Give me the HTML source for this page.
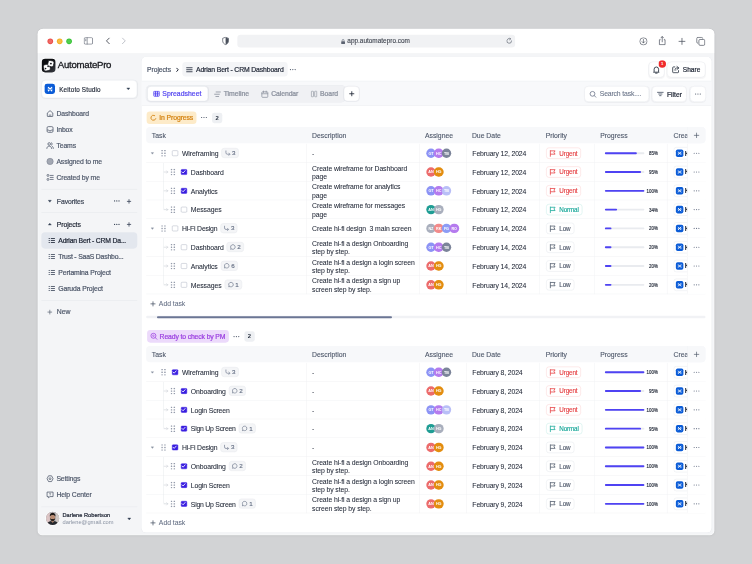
<!DOCTYPE html>
<html lang="en"><head><meta charset="utf-8"><title>AutomatePro - CRM Dashboard</title>
<style>
*{box-sizing:border-box;margin:0;padding:0}
svg{display:block}
html,body{width:752px;height:564px;overflow:hidden;background:#d2d3d5}
body{font-family:"Liberation Sans",sans-serif;color:#1d2433}
#stage{position:absolute;left:0;top:0;width:1600px;height:1200px;transform:scale(0.47);transform-origin:0 0;filter:contrast(1)}
#win{position:absolute;left:80px;top:61px;width:1440px;height:1077.500px;border-radius:12px 12px 10px 10px;background:#f4f5f7;overflow:hidden;box-shadow:0 0 0 1px rgba(20,25,40,.035),0 1px 5px rgba(20,25,40,.05)}
#win:after{content:'';position:absolute;inset:0;border-radius:12px 12px 10px 10px;box-shadow:inset 0 0 0 1.500px rgba(255,255,255,.75);pointer-events:none}
#tb{position:absolute;left:0;top:0;width:1440px;height:52px;background:#fff}
.abs{position:absolute}
.m{-webkit-text-stroke:.14px currentColor}
.sb{-webkit-text-stroke:.45px currentColor}
.tl{position:absolute;top:21px;width:12px;height:12px;border-radius:50%}
#url{position:absolute;left:425px;top:13px;width:591px;height:27px;border-radius:7px;background:#f1f2f4;font-size:13.700px;color:#3a3f4a;display:flex;align-items:center;justify-content:flex-start;gap:4.500px;padding-left:219.500px;-webkit-text-stroke:.2px currentColor}
#side{position:absolute;left:0;top:51px;width:221px;height:1025px}
.nav{position:absolute;left:18px;height:20px;display:flex;align-items:center;gap:5px;font-size:14.600px;color:#4b5567;letter-spacing:-.25px;white-space:nowrap;-webkit-text-stroke:.35px currentColor}
.nav span{padding-top:0px}
.sdiv{position:absolute;left:8px;width:204px;height:1px;background:#e4e6ea}
#card{position:absolute;left:221px;top:60px;width:1213px;height:1011.500px;background:#fff;border-radius:10px;overflow:hidden;box-shadow:0 0 0 1px #e9ebef}
.row{position:absolute;left:10px;width:1190px;height:40px;border-bottom:1px solid #f0f1f3;font-size:14.600px;color:#1d2433}
.cell{position:absolute;top:0;height:40px;display:flex;align-items:center;white-space:nowrap}
.vl{position:absolute;top:0;width:1px;background:#f0f1f3}
.th{position:absolute;left:10px;width:1190px;height:35px;background:#f7f8fa;border-radius:8px;font-size:14.600px;color:#4b5567;-webkit-text-stroke:.2px currentColor}
.th span{position:absolute;top:2px;line-height:35px;letter-spacing:0px}
.chip{position:absolute;height:27px;border-radius:7px;display:flex;align-items:center;gap:5px;padding:0 0 0 7px;font-size:14.600px;white-space:nowrap;-webkit-text-stroke:.45px currentColor}
.cnt{position:absolute;height:21.500px;width:22px;border-radius:5px;background:rgba(238,240,243,.99);font-size:12.500px;font-weight:700;color:#2b3342;text-align:center;line-height:22.500px}
.cb{width:12.800px;height:12.800px;border-radius:2.300px;border:1.900px solid #a9b0be;background:#fff;flex:none}
.cb.on{background:#3a1fe0;border-color:#3a1fe0;border-radius:2px}
.badge{height:21px;border:1px solid #e6e8ec;border-radius:6px;background:rgba(244,245,247,.99);display:flex;align-items:center;gap:3px;padding:0 5.500px;font-size:13.300px;color:#667085;margin-left:6.500px;margin-top:-1px;-webkit-text-stroke:.3px currentColor}
.av{width:20.600px;height:20.600px;border-radius:50%;font-size:8px;font-weight:700;color:#fff;text-align:center;line-height:21px;margin-right:-4.100px;flex:none;letter-spacing:-.2px}
.pr{height:24px;border-radius:6px;border:1px solid;display:flex;align-items:center;gap:6px;padding:0 7px 0 5px;font-size:13.400px;letter-spacing:-.3px;background:rgba(255,255,255,.99);-webkit-text-stroke:.25px currentColor}
.bar{position:relative;width:84px;height:3.500px;border-radius:2px;background:#e9ebef}
.bar i{position:absolute;left:0;top:0;height:3.500px;border-radius:2px;background:#4f43f3}
.pct{font-size:9.500px;color:#1d2433;width:29px;text-align:right;-webkit-text-stroke:.3px currentColor}
.desc{white-space:nowrap;line-height:18px;font-size:14.600px;letter-spacing:-.2px;-webkit-text-stroke:.1px currentColor}
.btn{position:absolute;height:34px;border:1px solid #e6e8ec;border-radius:9px;background:#fff;display:flex;align-items:center;justify-content:center;gap:6px;font-size:14.600px;color:#1d2433;white-space:nowrap;box-shadow:0 1px 2px rgba(16,24,40,.04)}
.tab{position:absolute;top:62px;height:34px;display:flex;align-items:center;gap:5px;font-size:14.600px;color:#8a909d;letter-spacing:-.1px;-webkit-text-stroke:.5px currentColor}
</style></head><body>
<div id="stage"><div id="win">
<div id="tb">
 <div class="tl" style="left:21px;background:radial-gradient(circle,#ef6a66 0 35%,#ea4d49 60%)"></div>
 <div class="tl" style="left:41px;background:radial-gradient(circle,#f7bd45 0 35%,#f3ae25 60%)"></div>
 <div class="tl" style="left:61px;background:radial-gradient(circle,#52cf50 0 35%,#38c236 60%)"></div>
 <div class="abs" style="left:98px;top:18px"><svg width="20" height="16" viewBox="0 0 20 16" fill="none" ><rect x="1" y="1" width="18" height="14" rx="2.500" stroke="#5b6270" stroke-width="1.500"/><path d="M7.500 1v14M3.500 4.500h1.500M3.500 7.500h1.500" stroke="#5b6270" stroke-width="1.300" stroke-linecap="round"/></svg></div>
 <div class="abs" style="left:144px;top:18px"><svg width="11" height="16" viewBox="0 0 11 16" fill="none" ><path d="M8.500 2 2.500 8l6 6" stroke="#3a3f4a" stroke-width="1.800" stroke-linecap="round" stroke-linejoin="round"/></svg></div>
 <div class="abs" style="left:178px;top:18px"><svg width="11" height="16" viewBox="0 0 11 16" fill="none" ><path d="M2.500 2l6 6-6 6" stroke="#b4b8c0" stroke-width="1.800" stroke-linecap="round" stroke-linejoin="round"/></svg></div>
 <div class="abs" style="left:392px;top:17px"><svg width="16" height="19" viewBox="0 0 16 19" fill="none" ><path d="M8 1.200 1.800 3.500v5.500c0 4 2.800 6.600 6.200 8 3.400-1.400 6.200-4 6.200-8V3.500z" stroke="#4a505c" stroke-width="1.500" stroke-linejoin="round"/><path d="M8 1.700v14.800c3.200-1.400 5.700-3.700 5.700-7.500V3.800z" fill="#4a505c"/></svg></div>
 <div id="url"><svg width="10" height="12" viewBox="0 0 10 12" fill="none" ><rect x="1" y="5.500" width="8" height="6" rx="1.200" fill="#5b6270"/><path d="M3 5.500V4a2 2 0 0 1 4 0v1.500" stroke="#5b6270" stroke-width="1.300"/></svg><span>app.automatepro.com</span></div>
 <div class="abs" style="left:997px;top:19px"><svg width="13" height="14" viewBox="0 0 13 14" fill="none" ><path d="M11.500 7A5 5 0 1 1 8.500 2.500" stroke="#5b6270" stroke-width="1.400" stroke-linecap="round"/><path d="M7.500 .8 9.800 2.700 7.500 4.600" stroke="#5b6270" stroke-width="1.400" stroke-linecap="round" stroke-linejoin="round"/></svg></div>
 <div class="abs" style="left:1280px;top:18px"><svg width="18" height="18" viewBox="0 0 18 18" fill="none" ><circle cx="9" cy="9" r="7.700" stroke="#4a505c" stroke-width="1.400"/><path d="M9 5v7M6 9.500l3 3 3-3" stroke="#4a505c" stroke-width="1.400" stroke-linecap="round" stroke-linejoin="round"/></svg></div>
 <div class="abs" style="left:1320px;top:15px"><svg width="18" height="21" viewBox="0 0 18 21" fill="none" ><path d="M5.500 8.500H3v10.500h12V8.500h-2.500" stroke="#4a505c" stroke-width="1.500" stroke-linejoin="round"/><path d="M9 13V2M6.300 4.500 9 1.800l2.700 2.700" stroke="#4a505c" stroke-width="1.500" stroke-linecap="round" stroke-linejoin="round"/></svg></div>
 <div class="abs" style="left:1362.500px;top:19px"><svg width="16" height="16" viewBox="0 0 16 16" fill="none" ><path d="M8 1.500v13M1.500 8h13" stroke="#4a505c" stroke-width="1.600" stroke-linecap="round"/></svg></div>
 <div class="abs" style="left:1401px;top:17px"><svg width="20" height="20" viewBox="0 0 20 20" fill="none" ><rect x="6" y="6" width="12.500" height="12.500" rx="2.500" stroke="#4a505c" stroke-width="1.500"/><path d="M14 4A2.500 2.500 0 0 0 11.500 1.500H4A2.500 2.500 0 0 0 1.500 4v7.500A2.500 2.500 0 0 0 4 14" stroke="#4a505c" stroke-width="1.500"/></svg></div>
</div>
<div id="side">
 <div class="abs" style="left:8.500px;top:12.500px;width:29px;height:29px;border-radius:7px;background:linear-gradient(135deg,#0e0f12 40%,#3a3d44);box-shadow:0 0 0 1.500px #fff"><svg width="29" height="29" viewBox="0 0 29 29" fill="none" ><rect x="4" y="12" width="13.500" height="13.500" rx="3.500" fill="#fff" stroke="#15171c" stroke-width="1.200" transform="rotate(-12 10.750 18.750)"/><rect x="13" y="4" width="12.500" height="12.500" rx="3.500" fill="#fff" stroke="#15171c" stroke-width="1.500" transform="rotate(14 19 10)"/><circle cx="8" cy="21" r="1.700" fill="#15171c"/><circle cx="13.300" cy="16.500" r="1.700" fill="#15171c"/><circle cx="19.300" cy="10.300" r="2" fill="#15171c"/></svg></div>
 <div class="abs" style="left:43px;top:14px;font-size:20.500px;line-height:24px;color:#15171c;letter-spacing:-.55px;-webkit-text-stroke:.6px #15171c">AutomatePro</div>
 <div class="abs" style="left:8px;top:58px;width:204px;height:39px;border:1px solid #e4e7ec;border-radius:9px;background:#fff;box-shadow:0 1px 2px rgba(16,24,40,.05)">
   <div class="abs" style="left:6px;top:7px"><div style="width:22px;height:22px;border-radius:5.3px;background:#0b5cd7;flex:none;display:flex;align-items:center;justify-content:center"><svg width="13" height="13" viewBox="0 0 10 10" fill="none" ><path d="M2.200 2.200 7.800 7.800M7.800 2.200 2.200 7.800" stroke="#fff" stroke-width="1.900" stroke-linecap="round"/><path d="M1.600 5h1.400M7 5h1.400" stroke="#fff" stroke-width="1.200" stroke-linecap="round"/></svg></div></div>
   <div class="abs sb" style="left:37px;top:2px;line-height:36px;font-size:13.500px;color:#1d2433;letter-spacing:.3px;-webkit-text-stroke:.3px currentColor">Keitoto Studio</div>
   <div class="abs" style="left:179px;top:13px"><svg width="10" height="10" viewBox="0 0 10 10" fill="none" ><path d="M1.800 3.200h6.400L5 7.200z" fill="#344054" stroke="#344054" stroke-width=".8" stroke-linejoin="round"/></svg></div>
 </div>
 <div class="nav" style="top:119px;left:18px;color:#4b5567;"><svg width="17" height="17" viewBox="0 0 16 16" fill="none" ><path d="M2.500 7 8 2.300 13.500 7v6.200a.8.8 0 0 1-.8.8H3.300a.8.8 0 0 1-.8-.8z" stroke="#4b5567" stroke-width="1.500" stroke-linejoin="round"/><path d="M6.200 11.300h3.600" stroke="#4b5567" stroke-width="1.500" stroke-linecap="round"/></svg><span>Dashboard</span></div>
 <div class="nav" style="top:153px;left:18px;color:#4b5567;"><svg width="17" height="17" viewBox="0 0 16 16" fill="none" ><rect x="2" y="2.300" width="12" height="11.400" rx="2.500" stroke="#4b5567" stroke-width="1.500"/><path d="M2 9h3.200l.9 1.600h3.800L10.800 9H14" stroke="#4b5567" stroke-width="1.500" stroke-linejoin="round"/></svg><span>Inbox</span></div>
 <div class="nav" style="top:187px;left:18px;color:#4b5567;"><svg width="17" height="17" viewBox="0 0 16 16" fill="none" ><circle cx="6.300" cy="5" r="2.600" stroke="#4b5567" stroke-width="1.500"/><path d="M1.500 14c0-2.700 2-4.600 4.800-4.600s4.800 1.900 4.800 4.600" stroke="#4b5567" stroke-width="1.500" stroke-linecap="round"/><path d="M10.800 2.600a2.600 2.600 0 0 1 0 4.800M12.500 9.800c1.300.6 2 2 2 4.200" stroke="#4b5567" stroke-width="1.500" stroke-linecap="round"/></svg><span>Teams</span></div>
 <div class="nav" style="top:221px;left:18px;color:#4b5567;"><svg width="17" height="17" viewBox="0 0 16 16" fill="none" ><circle cx="8" cy="8" r="6.300" fill="#a3a8b3" stroke="#7d8494" stroke-width="1.200"/></svg><span>Assigned to me</span></div>
 <div class="nav" style="top:255px;left:18px;color:#4b5567;"><svg width="17" height="17" viewBox="0 0 16 16" fill="none" ><rect x="2" y="2.200" width="3.600" height="3.600" rx="1" stroke="#4b5567" stroke-width="1.400"/><rect x="2" y="10.200" width="3.600" height="3.600" rx="1" stroke="#4b5567" stroke-width="1.400"/><path d="M8.300 4h6M8.300 8h6M8.300 12h6" stroke="#4b5567" stroke-width="1.500" stroke-linecap="round"/></svg><span>Created by me</span></div>
 <div class="sdiv" style="top:290px"></div>
 <div class="nav" style="top:306px;left:21px;color:#3d4656;gap:10px;-webkit-text-stroke:.4px currentColor"><svg width="10" height="10" viewBox="0 0 10 10" fill="none" ><path d="M1.800 3.200h6.400L5 7.200z" fill="#344054" stroke="#344054" stroke-width=".8" stroke-linejoin="round"/></svg><span>Favorites</span></div>
 <div class="abs" style="left:161px;top:308px"><svg width="15" height="15" viewBox="0 0 16 16" fill="none" ><circle cx="3" cy="8" r="1.4" fill="#344054"/><circle cx="8" cy="8" r="1.4" fill="#344054"/><circle cx="13" cy="8" r="1.4" fill="#344054"/></svg></div><div class="abs" style="left:188.500px;top:310.700px"><svg width="11" height="11" viewBox="0 0 16 16" fill="none" ><path d="M8 2.500v11M2.500 8h11" stroke="#344054" stroke-width="2.4" stroke-linecap="round"/></svg></div>
 <div class="sdiv" style="top:340px"></div>
 <div class="nav" style="top:355px;left:21px;color:#1d2433;gap:10px;-webkit-text-stroke:.4px currentColor"><svg width="10" height="10" viewBox="0 0 10 10" fill="none" ><path d="M1.800 6.800h6.400L5 2.800z" fill="#344054" stroke="#344054" stroke-width=".8" stroke-linejoin="round"/></svg><span>Projects</span></div>
 <div class="abs" style="left:161px;top:357.500px"><svg width="15" height="15" viewBox="0 0 16 16" fill="none" ><circle cx="3" cy="8" r="1.4" fill="#344054"/><circle cx="8" cy="8" r="1.4" fill="#344054"/><circle cx="13" cy="8" r="1.4" fill="#344054"/></svg></div><div class="abs" style="left:188.500px;top:359.500px"><svg width="11" height="11" viewBox="0 0 16 16" fill="none" ><path d="M8 2.500v11M2.500 8h11" stroke="#344054" stroke-width="2.4" stroke-linecap="round"/></svg></div>
 <div class="abs" style="left:8px;top:382px;width:204px;height:35px;border-radius:8px;background:#e3e7ee"></div>
 <div class="nav" style="top:389px;left:22px;color:#1d2433;gap:6px;letter-spacing:-.43px;-webkit-text-stroke:.45px currentColor"><svg width="16" height="16" viewBox="0 0 16 16" fill="none" style="overflow:visible"><path d="M7 4.45h7M7 8.70h7M7 12.96h7" stroke="#2b3342" stroke-width="1.9" stroke-linecap="round"/><path d="M2.400 4.45h.8M2.400 8.70h.8M2.400 12.96h.8" stroke="#2b3342" stroke-width="1.9" stroke-linecap="round"/></svg><span>Adrian Bert - CRM Da...</span></div>
 <div class="nav" style="top:423px;left:22px;color:#4b5567;gap:6px;letter-spacing:-.42px;-webkit-text-stroke:.4px currentColor"><svg width="16" height="16" viewBox="0 0 16 16" fill="none" style="overflow:visible"><path d="M7 4.49h7M7 8.74h7M7 13.00h7" stroke="#4b5567" stroke-width="1.9" stroke-linecap="round"/><path d="M2.400 4.49h.8M2.400 8.74h.8M2.400 13.00h.8" stroke="#4b5567" stroke-width="1.9" stroke-linecap="round"/></svg><span>Trust - SaaS Dashbo...</span></div>
 <div class="nav" style="top:458px;left:22px;color:#4b5567;gap:6px;-webkit-text-stroke:.4px currentColor"><svg width="16" height="16" viewBox="0 0 16 16" fill="none" style="overflow:visible"><path d="M7 3.53h7M7 7.79h7M7 12.04h7" stroke="#4b5567" stroke-width="1.9" stroke-linecap="round"/><path d="M2.400 3.53h.8M2.400 7.79h.8M2.400 12.04h.8" stroke="#4b5567" stroke-width="1.9" stroke-linecap="round"/></svg><span>Pertamina Project</span></div>
 <div class="nav" style="top:492px;left:22px;color:#4b5567;gap:6px;-webkit-text-stroke:.4px currentColor"><svg width="16" height="16" viewBox="0 0 16 16" fill="none" style="overflow:visible"><path d="M7 3.57h7M7 7.83h7M7 12.09h7" stroke="#4b5567" stroke-width="1.9" stroke-linecap="round"/><path d="M2.400 3.57h.8M2.400 7.83h.8M2.400 12.09h.8" stroke="#4b5567" stroke-width="1.9" stroke-linecap="round"/></svg><span>Garuda Project</span></div>
 <div class="sdiv" style="top:527px"></div>
 <div class="nav" style="top:542px;left:20px;color:#4b5567;gap:9px"><svg width="12" height="12" viewBox="0 0 16 16" fill="none" ><path d="M8 2.500v11M2.500 8h11" stroke="#4b5567" stroke-width="1.8" stroke-linecap="round"/></svg><span>New</span></div>
 <div class="nav" style="top:896px;left:18px;color:#4b5567;"><svg width="17" height="17" viewBox="0 0 16 16" fill="none" ><path d="M5 2.200h6l3 5.800-3 5.800H5L2 8z" stroke="#4b5567" stroke-width="1.500" stroke-linejoin="round"/><circle cx="8" cy="8" r="1.900" stroke="#4b5567" stroke-width="1.400"/></svg><span>Settings</span></div>
 <div class="nav" style="top:930px;left:18px;color:#4b5567;"><svg width="17" height="17" viewBox="0 0 16 16" fill="none" ><path d="M2 2.800h12v9H8l-3.300 2.400V11.800H2z" stroke="#4b5567" stroke-width="1.500" stroke-linejoin="round"/><path d="M6.800 5.800c.2-1 2.400-1 2.400.3 0 .9-1.200 1-1.200 2" stroke="#4b5567" stroke-width="1.200" stroke-linecap="round"/><circle cx="8" cy="9.700" r=".7" fill="#4b5567"/></svg><span>Help Center</span></div>
 <div class="sdiv" style="top:966px"></div>
 <div class="abs" style="left:18px;top:977px;width:28px;height:28px;border-radius:50%;overflow:hidden;background:#8d8f96;box-shadow:0 0 0 1.500px #fff"><svg width="28" height="28" viewBox="0 0 28 28" fill="none" ><rect width="28" height="28" fill="#b9b6b8"/><rect width="8" height="28" fill="#dcc4c4"/><rect x="21" width="7" height="28" fill="#cfc8c4"/><path d="M2 28c0-6 4-8.500 12-8.500s12 2.500 12 8.500z" fill="#24272d"/><path d="M11.500 17h5v4l-2.500 2-2.500-2z" fill="#b98d74"/><ellipse cx="14" cy="11.500" rx="5.500" ry="7" fill="#b98d74"/><path d="M8 10c-.5-5.500 2.500-8 6-8s6.500 2.500 6 8c-1-2.500-3-3.500-6-3.500s-5 1-6 3.500z" fill="#1f1a18"/><path d="M8.500 12.500c.3 5.500 3 7.500 5.500 7.500s5.200-2 5.500-7.500c-1 2.500-3 3-5.500 3s-4.500-.5-5.500-3z" fill="#2b221e"/></svg></div>
 <div class="abs sb" style="left:53px;top:977px;font-size:12px;color:#1d2433;line-height:15px;white-space:nowrap;letter-spacing:.05px">Darlene Robertson</div>
 <div class="abs" style="left:53px;top:992px;font-size:12.200px;color:#8a93a3;line-height:15px;white-space:nowrap">darlene@gmail.com</div>
 <div class="abs" style="left:190px;top:987px"><svg width="10" height="10" viewBox="0 0 10 10" fill="none" ><path d="M1.800 3.200h6.400L5 7.200z" fill="#344054" stroke="#344054" stroke-width=".8" stroke-linejoin="round"/></svg></div>
</div>
<div id="card">
 <div class="abs" style="left:0;top:51px;width:1213px;height:53px;background:#f8f9fb;border-top:1px solid #eceef1;border-bottom:1px solid #eceef1"></div>
 <div class="abs" style="left:12px;top:18px;font-size:14.300px;line-height:20px;color:#4b5567;letter-spacing:-.1px;-webkit-text-stroke:.4px currentColor">Projects</div>
 <div class="abs" style="left:73px;top:22px"><svg width="7" height="11" viewBox="0 0 7 11" fill="none" ><path d="M2 2 5.200 5.500 2 9" stroke="#1d2433" stroke-width="2.100" stroke-linecap="round" stroke-linejoin="round"/></svg></div>
 <div class="abs m" style="left:87px;top:11px;height:31px;padding:0 9px 0 7px;border-radius:7px;background:#f4f5f7;display:flex;align-items:center;gap:6px;font-size:14.600px;color:#1d2433;white-space:nowrap;letter-spacing:-.31px;-webkit-text-stroke:.4px currentColor"><svg width="16" height="16" viewBox="0 0 16 16" fill="none" style="overflow:visible"><path d="M2.200 4.12h11.600M2.200 8.37h11.600M2.200 12.63h11.600" stroke="#2b3342" stroke-width="1.9" stroke-linecap="round"/></svg><span style="padding-top:1px">Adrian Bert - CRM Dashboard</span></div>
 <div class="abs" style="left:314px;top:19px"><svg width="16" height="16" viewBox="0 0 16 16" fill="none" ><circle cx="3" cy="8" r="1.3" fill="#4b5567"/><circle cx="8" cy="8" r="1.3" fill="#4b5567"/><circle cx="13" cy="8" r="1.3" fill="#4b5567"/></svg></div>
 <div class="btn" style="left:1078.500px;top:10px;width:34px"><svg width="19" height="19" viewBox="0 0 16 16" fill="none" ><path d="M4 11.500V7a4 4 0 0 1 8 0v4.500l1 .8H3z" stroke="#1f2937" stroke-width="1.500" stroke-linejoin="round"/><path d="M6.600 14h2.800" stroke="#1f2937" stroke-width="1.500" stroke-linecap="round"/></svg></div>
 <div class="abs" style="left:1100px;top:7px;width:16px;height:16px;border-radius:50%;background:#ef2b2b;color:#fff;font-size:9px;font-weight:700;text-align:center;line-height:16px">1</div>
 <div class="btn" style="left:1117.500px;top:10px;width:82px;font-size:14px;-webkit-text-stroke:.45px currentColor"><svg width="18" height="18" viewBox="0 0 16 16" fill="none" ><path d="M6 3H3.500A1.500 1.500 0 0 0 2 4.500v8A1.500 1.500 0 0 0 3.500 14h8a1.500 1.500 0 0 0 1.500-1.500V10" stroke="#1f2937" stroke-width="1.500" stroke-linecap="round"/><path d="M10 2l3.500 3L10 8M13.300 5H9.500C7.500 5 6.500 6.500 6.500 8.500v1" stroke="#1f2937" stroke-width="1.500" stroke-linecap="round" stroke-linejoin="round"/></svg><span style="padding-top:1px">Share</span></div>

 <div class="abs" style="left:10px;top:61px;width:424px;height:35px;border-radius:9px;background:#f0f1f4;box-shadow:0 0 0 1px #eaecf0"></div>
 <div class="btn" style="left:11.500px;top:62px;width:130px;height:32.500px;color:#5546f0;border-color:#d9dde4;border-radius:8px;letter-spacing:.04px;-webkit-text-stroke:.45px currentColor;justify-content:flex-start;padding-left:12.500px;gap:5.300px"><svg width="14" height="13" viewBox="0 0 14 13" fill="none" ><rect x=".9" y=".9" width="12.200" height="11.200" rx="1.800" stroke="#5546f0" stroke-width="1.800" fill="#d6d3fd"/><path d="M4.900 1v11M9.100 1v11" stroke="#5546f0" stroke-width="1.900"/><path d="M1 6.500h12" stroke="#5546f0" stroke-width="1.200"/></svg><span style="padding-top:1px">Spreadsheet</span></div>
 <div class="tab" style="left:153px"><svg width="17" height="17" viewBox="0 0 16 16" fill="none" ><path d="M5.500 3.500h8.500M2.500 8h9.500M5 12.500h5.500" stroke="#8f95a1" stroke-width="1.700" stroke-linecap="round"/></svg><span>Timeline</span></div>
 <div class="tab" style="left:254px;letter-spacing:-.2px"><svg width="17" height="17" viewBox="0 0 16 16" fill="none" ><rect x="2" y="3.200" width="12" height="11" rx="1.500" stroke="#8f95a1" stroke-width="1.600"/><path d="M2 7h12M5.300 1.500v3M10.700 1.500v3" stroke="#8f95a1" stroke-width="1.600" stroke-linecap="round"/></svg><span>Calendar</span></div>
 <div class="tab" style="left:359px"><svg width="16" height="16" viewBox="0 0 16 16" fill="none" ><rect x="2.500" y="2" width="4.500" height="12" rx="1.200" stroke="#8f95a1" stroke-width="1.400"/><rect x="9.500" y="2" width="4.500" height="12" rx="1.200" stroke="#8f95a1" stroke-width="1.400"/></svg><span>Board</span></div>
 <div class="btn" style="left:430px;top:62px;width:34px;height:33px;border-color:#dcdfe5"><svg width="13" height="13" viewBox="0 0 16 16" fill="none" ><path d="M8 2.500v11M2.500 8h11" stroke="#1d2433" stroke-width="2.2" stroke-linecap="round"/></svg></div>
 <div class="btn m" style="left:942px;top:62px;width:138px;justify-content:flex-start;padding-left:9px;color:#667085;letter-spacing:-.33px"><svg width="17" height="17" viewBox="0 0 16 16" fill="none" ><circle cx="7.200" cy="7.200" r="4.800" stroke="#667085" stroke-width="1.500"/><path d="M10.800 10.800 14 14" stroke="#667085" stroke-width="1.500" stroke-linecap="round"/></svg><span>Search task....</span></div>
 <div class="btn" style="left:1086px;top:62px;width:74px;font-size:14.300px;-webkit-text-stroke:.45px currentColor"><svg width="16" height="16" viewBox="0 0 16 16" fill="none" ><path d="M2 4.500h12M4.500 8h7M6.500 11.500h3" stroke="#344054" stroke-width="1.600" stroke-linecap="round"/></svg><span style="padding-top:2px">Filter</span></div>
 <div class="btn" style="left:1167px;top:62px;width:34px"><svg width="16" height="16" viewBox="0 0 16 16" fill="none" ><circle cx="3" cy="8" r="1.3" fill="#4b5567"/><circle cx="8" cy="8" r="1.3" fill="#4b5567"/><circle cx="13" cy="8" r="1.3" fill="#4b5567"/></svg></div>

 <div class="chip" style="left:11px;top:115.500px;width:106px;background:#fdebc9;color:#d4820f"><svg width="15" height="15" viewBox="0 0 14 14" fill="none" ><path d="M9.500 2.670A5 5 0 1 0 11.700 8.700" stroke="#d4820f" stroke-width="1.700" stroke-linecap="round"/></svg><span style="padding-top:1px;letter-spacing:-.24px">In Progress</span></div>
 <div class="abs" style="left:125px;top:121px"><svg width="16" height="16" viewBox="0 0 16 16" fill="none" ><circle cx="3" cy="8" r="1.3" fill="#4b5567"/><circle cx="8" cy="8" r="1.3" fill="#4b5567"/><circle cx="13" cy="8" r="1.3" fill="#4b5567"/></svg></div>
 <div class="cnt" style="left:150px;top:119px">2</div>
 <div class="th" style="top:149px"><span style="left:12px">Task</span><span style="left:353px">Description</span><span style="left:593px">Assignee</span><span style="left:693px">Due Date</span><span style="left:850px">Priority</span><span style="left:966px">Progress</span><span style="left:1122px">Crea</span><div class="abs" style="left:1151px;top:0;width:39px;height:35px;background:#f7f8fa;border-left:1px solid #eceef1;border-radius:0 8px 8px 0;display:flex;align-items:center;justify-content:center"><svg width="14" height="14" viewBox="0 0 16 16" fill="none" ><path d="M8 2.500v11M2.500 8h11" stroke="#4b5567" stroke-width="1.6" stroke-linecap="round"/></svg></div></div><div class="row" style="top:185px"><div class="abs" style="left:8.500px;top:15.500px"><svg width="8.5" height="8.5" viewBox="0 0 10 10" fill="none" ><path d="M1.800 3.200h6.400L5 7.200z" fill="#8a92a2" stroke="#8a92a2" stroke-width=".8" stroke-linejoin="round"/></svg></div><div class="abs" style="left:31.700px;top:12.800px"><svg width="10" height="14.3" viewBox="0 0 10 14.3" fill="none" ><rect x="0.0" y="0.0" width="3.400" height="3" rx=".8" fill="#959cab"/><rect x="0.0" y="5.65" width="3.400" height="3" rx=".8" fill="#959cab"/><rect x="0.0" y="11.3" width="3.400" height="3" rx=".8" fill="#959cab"/><rect x="6.3" y="0.0" width="3.400" height="3" rx=".8" fill="#959cab"/><rect x="6.3" y="5.65" width="3.400" height="3" rx=".8" fill="#959cab"/><rect x="6.3" y="11.3" width="3.400" height="3" rx=".8" fill="#959cab"/></svg></div><div class="cb" style="position:absolute;left:55.1px;top:13.600px"></div><div class="cell m" style="left:76px"><span style="letter-spacing:-0.08px;position:relative;top:1px">Wireframing</span><div class="badge"><svg width="13" height="13" viewBox="0 0 12 12" fill="none" ><path d="M2.500 2v3.500a3 3 0 0 0 3 3h4.500" stroke="#8a92a3" stroke-width="1.700" stroke-linecap="round" stroke-linejoin="round"/><path d="M8.200 6.200 10.500 8.500 8.200 10.800" stroke="#8a92a3" stroke-width="1.500" stroke-linecap="round" stroke-linejoin="round"/></svg><span>3</span></div></div><div class="cell desc" style="left:353px;padding-top:2px"><div>-</div></div><div class="cell" style="left:595.500px"><div class="av" style="background:#8c93f5">GT</div><div class="av" style="background:#b57bee">HC</div><div class="av" style="background:#7b8499">TB</div></div><div class="cell" style="left:694px;letter-spacing:-.27px;padding-top:2px;-webkit-text-stroke:.1px currentColor">February 12, 2024</div><div class="cell" style="left:851px"><div class="pr" style="color:#e5383b;border-color:#fbd0d0"><svg width="16" height="16" viewBox="0 0 16 16" fill="none" ><path d="M3 14.500V2.500" stroke="#e5383b" stroke-width="1.600" stroke-linecap="round"/><path d="M3 3h10l-2.300 3.500L13 10H3" stroke="#e5383b" stroke-width="1.600" stroke-linejoin="round"/></svg><span style="padding-top:1px">Urgent</span></div></div><div class="cell" style="left:976px"><div class="bar"><i style="width:68.4px"></i></div><div class="pct">85%</div></div><div class="cell" style="left:1122px;width:32px;overflow:hidden"><div style="height:26px;width:80px;border:1px solid #e6e8ec;border-radius:6px;display:flex;align-items:center;padding-left:4px;gap:3px;flex:none"><div style="width:16px;height:16px;border-radius:3.8px;background:#0b5cd7;flex:none;display:flex;align-items:center;justify-content:center"><svg width="10" height="10" viewBox="0 0 10 10" fill="none" ><path d="M2.200 2.200 7.800 7.800M7.800 2.200 2.200 7.800" stroke="#fff" stroke-width="1.900" stroke-linecap="round"/><path d="M1.600 5h1.400M7 5h1.400" stroke="#fff" stroke-width="1.200" stroke-linecap="round"/></svg></div><span style="font-weight:700;font-size:14px">K</span></div></div><div class="abs" style="left:1151px;top:0;width:39px;height:39px;background:#fff;border-left:1px solid #f0f1f3;display:flex;align-items:center;justify-content:center"><svg width="16" height="16" viewBox="0 0 16 16" fill="none" ><circle cx="3" cy="8" r="1.2" fill="#667085"/><circle cx="8" cy="8" r="1.2" fill="#667085"/><circle cx="13" cy="8" r="1.2" fill="#667085"/></svg></div></div><div class="row" style="top:225px"><div class="abs" style="left:37px;top:15px"><svg width="12" height="10" viewBox="0 0 12 10" fill="none" ><path d="M0 5h9M6.500 2.500 9 5 6.500 7.500" stroke="#c9cdd5" stroke-width="1.200" fill="none" stroke-linecap="round" stroke-linejoin="round"/></svg></div><div class="abs" style="left:51.700px;top:12.800px"><svg width="10" height="14.3" viewBox="0 0 10 14.3" fill="none" ><rect x="0.0" y="0.0" width="3.400" height="3" rx=".8" fill="#959cab"/><rect x="0.0" y="5.65" width="3.400" height="3" rx=".8" fill="#959cab"/><rect x="0.0" y="11.3" width="3.400" height="3" rx=".8" fill="#959cab"/><rect x="6.3" y="0.0" width="3.400" height="3" rx=".8" fill="#959cab"/><rect x="6.3" y="5.65" width="3.400" height="3" rx=".8" fill="#959cab"/><rect x="6.3" y="11.3" width="3.400" height="3" rx=".8" fill="#959cab"/></svg></div><div class="cb on" style="position:absolute;left:74.1px;top:13.600px"><svg style="position:absolute;left:-2px;top:-2px" width="13" height="13" viewBox="0 0 13 13"><path d="M3.300 6.700 5.600 9l4.200-4.800" stroke="#fff" stroke-width="1.800" fill="none" stroke-linecap="round" stroke-linejoin="round"/></svg></div><div class="cell m" style="left:95px"><span style="letter-spacing:-0.17px;position:relative;top:1px">Dashboard</span></div><div class="cell desc" style="left:353px;padding-top:2px"><div>Create wireframe for Dashboard<br>page</div></div><div class="cell" style="left:595.500px"><div class="av" style="background:#ec6b6b">AN</div><div class="av" style="background:#e38d0f">HG</div></div><div class="cell" style="left:694px;letter-spacing:-.27px;padding-top:2px;-webkit-text-stroke:.1px currentColor">February 12, 2024</div><div class="cell" style="left:851px"><div class="pr" style="color:#e5383b;border-color:#fbd0d0"><svg width="16" height="16" viewBox="0 0 16 16" fill="none" ><path d="M3 14.500V2.500" stroke="#e5383b" stroke-width="1.600" stroke-linecap="round"/><path d="M3 3h10l-2.300 3.500L13 10H3" stroke="#e5383b" stroke-width="1.600" stroke-linejoin="round"/></svg><span style="padding-top:1px">Urgent</span></div></div><div class="cell" style="left:976px"><div class="bar"><i style="width:76.8px"></i></div><div class="pct">95%</div></div><div class="cell" style="left:1122px;width:32px;overflow:hidden"><div style="height:26px;width:80px;border:1px solid #e6e8ec;border-radius:6px;display:flex;align-items:center;padding-left:4px;gap:3px;flex:none"><div style="width:16px;height:16px;border-radius:3.8px;background:#0b5cd7;flex:none;display:flex;align-items:center;justify-content:center"><svg width="10" height="10" viewBox="0 0 10 10" fill="none" ><path d="M2.200 2.200 7.800 7.800M7.800 2.200 2.200 7.800" stroke="#fff" stroke-width="1.900" stroke-linecap="round"/><path d="M1.600 5h1.400M7 5h1.400" stroke="#fff" stroke-width="1.200" stroke-linecap="round"/></svg></div><span style="font-weight:700;font-size:14px">K</span></div></div><div class="abs" style="left:1151px;top:0;width:39px;height:39px;background:#fff;border-left:1px solid #f0f1f3;display:flex;align-items:center;justify-content:center"><svg width="16" height="16" viewBox="0 0 16 16" fill="none" ><circle cx="3" cy="8" r="1.2" fill="#667085"/><circle cx="8" cy="8" r="1.2" fill="#667085"/><circle cx="13" cy="8" r="1.2" fill="#667085"/></svg></div></div><div class="row" style="top:265px"><div class="abs" style="left:37px;top:15px"><svg width="12" height="10" viewBox="0 0 12 10" fill="none" ><path d="M0 5h9M6.500 2.500 9 5 6.500 7.500" stroke="#c9cdd5" stroke-width="1.200" fill="none" stroke-linecap="round" stroke-linejoin="round"/></svg></div><div class="abs" style="left:51.700px;top:12.800px"><svg width="10" height="14.3" viewBox="0 0 10 14.3" fill="none" ><rect x="0.0" y="0.0" width="3.400" height="3" rx=".8" fill="#959cab"/><rect x="0.0" y="5.65" width="3.400" height="3" rx=".8" fill="#959cab"/><rect x="0.0" y="11.3" width="3.400" height="3" rx=".8" fill="#959cab"/><rect x="6.3" y="0.0" width="3.400" height="3" rx=".8" fill="#959cab"/><rect x="6.3" y="5.65" width="3.400" height="3" rx=".8" fill="#959cab"/><rect x="6.3" y="11.3" width="3.400" height="3" rx=".8" fill="#959cab"/></svg></div><div class="cb on" style="position:absolute;left:74.1px;top:13.600px"><svg style="position:absolute;left:-2px;top:-2px" width="13" height="13" viewBox="0 0 13 13"><path d="M3.300 6.700 5.600 9l4.200-4.800" stroke="#fff" stroke-width="1.800" fill="none" stroke-linecap="round" stroke-linejoin="round"/></svg></div><div class="cell m" style="left:95px"><span style="letter-spacing:-0.13px;position:relative;top:1px">Analytics</span></div><div class="cell desc" style="left:353px;padding-top:2px"><div>Create wireframe for analytics<br>page</div></div><div class="cell" style="left:595.500px"><div class="av" style="background:#8c93f5">GT</div><div class="av" style="background:#b57bee">HC</div><div class="av" style="background:#b9bff7">TB</div></div><div class="cell" style="left:694px;letter-spacing:-.27px;padding-top:2px;-webkit-text-stroke:.1px currentColor">February 12, 2024</div><div class="cell" style="left:851px"><div class="pr" style="color:#e5383b;border-color:#fbd0d0"><svg width="16" height="16" viewBox="0 0 16 16" fill="none" ><path d="M3 14.500V2.500" stroke="#e5383b" stroke-width="1.600" stroke-linecap="round"/><path d="M3 3h10l-2.300 3.500L13 10H3" stroke="#e5383b" stroke-width="1.600" stroke-linejoin="round"/></svg><span style="padding-top:1px">Urgent</span></div></div><div class="cell" style="left:976px"><div class="bar"><i style="width:84.0px"></i></div><div class="pct">100%</div></div><div class="cell" style="left:1122px;width:32px;overflow:hidden"><div style="height:26px;width:80px;border:1px solid #e6e8ec;border-radius:6px;display:flex;align-items:center;padding-left:4px;gap:3px;flex:none"><div style="width:16px;height:16px;border-radius:3.8px;background:#0b5cd7;flex:none;display:flex;align-items:center;justify-content:center"><svg width="10" height="10" viewBox="0 0 10 10" fill="none" ><path d="M2.200 2.200 7.800 7.800M7.800 2.200 2.200 7.800" stroke="#fff" stroke-width="1.900" stroke-linecap="round"/><path d="M1.600 5h1.400M7 5h1.400" stroke="#fff" stroke-width="1.200" stroke-linecap="round"/></svg></div><span style="font-weight:700;font-size:14px">K</span></div></div><div class="abs" style="left:1151px;top:0;width:39px;height:39px;background:#fff;border-left:1px solid #f0f1f3;display:flex;align-items:center;justify-content:center"><svg width="16" height="16" viewBox="0 0 16 16" fill="none" ><circle cx="3" cy="8" r="1.2" fill="#667085"/><circle cx="8" cy="8" r="1.2" fill="#667085"/><circle cx="13" cy="8" r="1.2" fill="#667085"/></svg></div></div><div class="row" style="top:305px"><div class="abs" style="left:37px;top:15px"><svg width="12" height="10" viewBox="0 0 12 10" fill="none" ><path d="M0 5h9M6.500 2.500 9 5 6.500 7.500" stroke="#c9cdd5" stroke-width="1.200" fill="none" stroke-linecap="round" stroke-linejoin="round"/></svg></div><div class="abs" style="left:51.700px;top:12.800px"><svg width="10" height="14.3" viewBox="0 0 10 14.3" fill="none" ><rect x="0.0" y="0.0" width="3.400" height="3" rx=".8" fill="#959cab"/><rect x="0.0" y="5.65" width="3.400" height="3" rx=".8" fill="#959cab"/><rect x="0.0" y="11.3" width="3.400" height="3" rx=".8" fill="#959cab"/><rect x="6.3" y="0.0" width="3.400" height="3" rx=".8" fill="#959cab"/><rect x="6.3" y="5.65" width="3.400" height="3" rx=".8" fill="#959cab"/><rect x="6.3" y="11.3" width="3.400" height="3" rx=".8" fill="#959cab"/></svg></div><div class="cb" style="position:absolute;left:74.1px;top:13.600px"></div><div class="cell m" style="left:95px"><span style="letter-spacing:-0.11px;position:relative;top:1px">Messages</span></div><div class="cell desc" style="left:353px;padding-top:2px"><div>Create wireframe for messages<br>page</div></div><div class="cell" style="left:595.500px"><div class="av" style="background:#1f9d94">AN</div><div class="av" style="background:#a9afbd">HG</div></div><div class="cell" style="left:694px;letter-spacing:-.27px;padding-top:2px;-webkit-text-stroke:.1px currentColor">February 12, 2024</div><div class="cell" style="left:851px"><div class="pr" style="color:#0fa596;border-color:#c3ebe5"><svg width="16" height="16" viewBox="0 0 16 16" fill="none" ><path d="M3 14.500V2.500" stroke="#0fa596" stroke-width="1.600" stroke-linecap="round"/><path d="M3 3h10l-2.300 3.500L13 10H3" stroke="#0fa596" stroke-width="1.600" stroke-linejoin="round"/></svg><span style="padding-top:1px">Normal</span></div></div><div class="cell" style="left:976px"><div class="bar"><i style="width:25.6px"></i></div><div class="pct">34%</div></div><div class="cell" style="left:1122px;width:32px;overflow:hidden"><div style="height:26px;width:80px;border:1px solid #e6e8ec;border-radius:6px;display:flex;align-items:center;padding-left:4px;gap:3px;flex:none"><div style="width:16px;height:16px;border-radius:3.8px;background:#0b5cd7;flex:none;display:flex;align-items:center;justify-content:center"><svg width="10" height="10" viewBox="0 0 10 10" fill="none" ><path d="M2.200 2.200 7.800 7.800M7.800 2.200 2.200 7.800" stroke="#fff" stroke-width="1.900" stroke-linecap="round"/><path d="M1.600 5h1.400M7 5h1.400" stroke="#fff" stroke-width="1.200" stroke-linecap="round"/></svg></div><span style="font-weight:700;font-size:14px">K</span></div></div><div class="abs" style="left:1151px;top:0;width:39px;height:39px;background:#fff;border-left:1px solid #f0f1f3;display:flex;align-items:center;justify-content:center"><svg width="16" height="16" viewBox="0 0 16 16" fill="none" ><circle cx="3" cy="8" r="1.2" fill="#667085"/><circle cx="8" cy="8" r="1.2" fill="#667085"/><circle cx="13" cy="8" r="1.2" fill="#667085"/></svg></div></div><div class="row" style="top:345px"><div class="abs" style="left:8.500px;top:15.500px"><svg width="8.5" height="8.5" viewBox="0 0 10 10" fill="none" ><path d="M1.800 3.200h6.400L5 7.200z" fill="#8a92a2" stroke="#8a92a2" stroke-width=".8" stroke-linejoin="round"/></svg></div><div class="abs" style="left:31.700px;top:12.800px"><svg width="10" height="14.3" viewBox="0 0 10 14.3" fill="none" ><rect x="0.0" y="0.0" width="3.400" height="3" rx=".8" fill="#959cab"/><rect x="0.0" y="5.65" width="3.400" height="3" rx=".8" fill="#959cab"/><rect x="0.0" y="11.3" width="3.400" height="3" rx=".8" fill="#959cab"/><rect x="6.3" y="0.0" width="3.400" height="3" rx=".8" fill="#959cab"/><rect x="6.3" y="5.65" width="3.400" height="3" rx=".8" fill="#959cab"/><rect x="6.3" y="11.3" width="3.400" height="3" rx=".8" fill="#959cab"/></svg></div><div class="cb" style="position:absolute;left:55.1px;top:13.600px"></div><div class="cell m" style="left:76px"><span style="letter-spacing:-0.41px;position:relative;top:1px">Hi-Fi Design</span><div class="badge"><svg width="13" height="13" viewBox="0 0 12 12" fill="none" ><path d="M2.500 2v3.500a3 3 0 0 0 3 3h4.500" stroke="#8a92a3" stroke-width="1.700" stroke-linecap="round" stroke-linejoin="round"/><path d="M8.200 6.200 10.500 8.500 8.200 10.800" stroke="#8a92a3" stroke-width="1.500" stroke-linecap="round" stroke-linejoin="round"/></svg><span>3</span></div></div><div class="cell desc" style="left:353px;padding-top:2px"><div>Create hi-fi design&nbsp; 3 main screen</div></div><div class="cell" style="left:595.500px"><div class="av" style="background:#a9afbd">NZ</div><div class="av" style="background:#f28b8b">RK</div><div class="av" style="background:#8c9cf5">FG</div><div class="av" style="background:#b57bee">RO</div></div><div class="cell" style="left:694px;letter-spacing:-.27px;padding-top:2px;-webkit-text-stroke:.1px currentColor">February 14, 2024</div><div class="cell" style="left:851px"><div class="pr" style="color:#4b5567;border-color:#e4e7ec"><svg width="16" height="16" viewBox="0 0 16 16" fill="none" ><path d="M3 14.500V2.500" stroke="#4b5567" stroke-width="1.600" stroke-linecap="round"/><path d="M3 3h10l-2.300 3.500L13 10H3" stroke="#4b5567" stroke-width="1.600" stroke-linejoin="round"/></svg><span style="padding-top:1px">Low</span></div></div><div class="cell" style="left:976px"><div class="bar"><i style="width:13.8px"></i></div><div class="pct">20%</div></div><div class="cell" style="left:1122px;width:32px;overflow:hidden"><div style="height:26px;width:80px;border:1px solid #e6e8ec;border-radius:6px;display:flex;align-items:center;padding-left:4px;gap:3px;flex:none"><div style="width:16px;height:16px;border-radius:3.8px;background:#0b5cd7;flex:none;display:flex;align-items:center;justify-content:center"><svg width="10" height="10" viewBox="0 0 10 10" fill="none" ><path d="M2.200 2.200 7.800 7.800M7.800 2.200 2.200 7.800" stroke="#fff" stroke-width="1.900" stroke-linecap="round"/><path d="M1.600 5h1.400M7 5h1.400" stroke="#fff" stroke-width="1.200" stroke-linecap="round"/></svg></div><span style="font-weight:700;font-size:14px">K</span></div></div><div class="abs" style="left:1151px;top:0;width:39px;height:39px;background:#fff;border-left:1px solid #f0f1f3;display:flex;align-items:center;justify-content:center"><svg width="16" height="16" viewBox="0 0 16 16" fill="none" ><circle cx="3" cy="8" r="1.2" fill="#667085"/><circle cx="8" cy="8" r="1.2" fill="#667085"/><circle cx="13" cy="8" r="1.2" fill="#667085"/></svg></div></div><div class="row" style="top:385px"><div class="abs" style="left:37px;top:15px"><svg width="12" height="10" viewBox="0 0 12 10" fill="none" ><path d="M0 5h9M6.500 2.500 9 5 6.500 7.500" stroke="#c9cdd5" stroke-width="1.200" fill="none" stroke-linecap="round" stroke-linejoin="round"/></svg></div><div class="abs" style="left:51.700px;top:12.800px"><svg width="10" height="14.3" viewBox="0 0 10 14.3" fill="none" ><rect x="0.0" y="0.0" width="3.400" height="3" rx=".8" fill="#959cab"/><rect x="0.0" y="5.65" width="3.400" height="3" rx=".8" fill="#959cab"/><rect x="0.0" y="11.3" width="3.400" height="3" rx=".8" fill="#959cab"/><rect x="6.3" y="0.0" width="3.400" height="3" rx=".8" fill="#959cab"/><rect x="6.3" y="5.65" width="3.400" height="3" rx=".8" fill="#959cab"/><rect x="6.3" y="11.3" width="3.400" height="3" rx=".8" fill="#959cab"/></svg></div><div class="cb" style="position:absolute;left:74.1px;top:13.600px"></div><div class="cell m" style="left:95px"><span style="letter-spacing:-0.17px;position:relative;top:1px">Dashboard</span><div class="badge"><svg width="13" height="13" viewBox="0 0 12 12" fill="none" ><path d="M6 1.500a4.500 4.500 0 1 1-2.300 8.400L1.500 10.500l.7-2.100A4.500 4.500 0 0 1 6 1.500z" stroke="#667085" stroke-width="1.300" stroke-linejoin="round"/></svg><span>2</span></div></div><div class="cell desc" style="left:353px;padding-top:2px"><div>Create hi-fi a design Onboarding<br>step by step.</div></div><div class="cell" style="left:595.500px"><div class="av" style="background:#8c93f5">GT</div><div class="av" style="background:#b57bee">HC</div><div class="av" style="background:#7b8499">TB</div></div><div class="cell" style="left:694px;letter-spacing:-.27px;padding-top:2px;-webkit-text-stroke:.1px currentColor">February 14, 2024</div><div class="cell" style="left:851px"><div class="pr" style="color:#4b5567;border-color:#e4e7ec"><svg width="16" height="16" viewBox="0 0 16 16" fill="none" ><path d="M3 14.500V2.500" stroke="#4b5567" stroke-width="1.600" stroke-linecap="round"/><path d="M3 3h10l-2.300 3.500L13 10H3" stroke="#4b5567" stroke-width="1.600" stroke-linejoin="round"/></svg><span style="padding-top:1px">Low</span></div></div><div class="cell" style="left:976px"><div class="bar"><i style="width:13.8px"></i></div><div class="pct">20%</div></div><div class="cell" style="left:1122px;width:32px;overflow:hidden"><div style="height:26px;width:80px;border:1px solid #e6e8ec;border-radius:6px;display:flex;align-items:center;padding-left:4px;gap:3px;flex:none"><div style="width:16px;height:16px;border-radius:3.8px;background:#0b5cd7;flex:none;display:flex;align-items:center;justify-content:center"><svg width="10" height="10" viewBox="0 0 10 10" fill="none" ><path d="M2.200 2.200 7.800 7.800M7.800 2.200 2.200 7.800" stroke="#fff" stroke-width="1.900" stroke-linecap="round"/><path d="M1.600 5h1.400M7 5h1.400" stroke="#fff" stroke-width="1.200" stroke-linecap="round"/></svg></div><span style="font-weight:700;font-size:14px">K</span></div></div><div class="abs" style="left:1151px;top:0;width:39px;height:39px;background:#fff;border-left:1px solid #f0f1f3;display:flex;align-items:center;justify-content:center"><svg width="16" height="16" viewBox="0 0 16 16" fill="none" ><circle cx="3" cy="8" r="1.2" fill="#667085"/><circle cx="8" cy="8" r="1.2" fill="#667085"/><circle cx="13" cy="8" r="1.2" fill="#667085"/></svg></div></div><div class="row" style="top:425px"><div class="abs" style="left:37px;top:15px"><svg width="12" height="10" viewBox="0 0 12 10" fill="none" ><path d="M0 5h9M6.500 2.500 9 5 6.500 7.500" stroke="#c9cdd5" stroke-width="1.200" fill="none" stroke-linecap="round" stroke-linejoin="round"/></svg></div><div class="abs" style="left:51.700px;top:12.800px"><svg width="10" height="14.3" viewBox="0 0 10 14.3" fill="none" ><rect x="0.0" y="0.0" width="3.400" height="3" rx=".8" fill="#959cab"/><rect x="0.0" y="5.65" width="3.400" height="3" rx=".8" fill="#959cab"/><rect x="0.0" y="11.3" width="3.400" height="3" rx=".8" fill="#959cab"/><rect x="6.3" y="0.0" width="3.400" height="3" rx=".8" fill="#959cab"/><rect x="6.3" y="5.65" width="3.400" height="3" rx=".8" fill="#959cab"/><rect x="6.3" y="11.3" width="3.400" height="3" rx=".8" fill="#959cab"/></svg></div><div class="cb" style="position:absolute;left:74.1px;top:13.600px"></div><div class="cell m" style="left:95px"><span style="letter-spacing:-0.13px;position:relative;top:1px">Analytics</span><div class="badge"><svg width="13" height="13" viewBox="0 0 12 12" fill="none" ><path d="M6 1.500a4.500 4.500 0 1 1-2.300 8.400L1.500 10.500l.7-2.100A4.500 4.500 0 0 1 6 1.500z" stroke="#667085" stroke-width="1.300" stroke-linejoin="round"/></svg><span>6</span></div></div><div class="cell desc" style="left:353px;padding-top:2px"><div>Create hi-fi a design a login screen<br>step by step.</div></div><div class="cell" style="left:595.500px"><div class="av" style="background:#ec6b6b">AN</div><div class="av" style="background:#e38d0f">HG</div></div><div class="cell" style="left:694px;letter-spacing:-.27px;padding-top:2px;-webkit-text-stroke:.1px currentColor">February 14, 2024</div><div class="cell" style="left:851px"><div class="pr" style="color:#4b5567;border-color:#e4e7ec"><svg width="16" height="16" viewBox="0 0 16 16" fill="none" ><path d="M3 14.500V2.500" stroke="#4b5567" stroke-width="1.600" stroke-linecap="round"/><path d="M3 3h10l-2.300 3.500L13 10H3" stroke="#4b5567" stroke-width="1.600" stroke-linejoin="round"/></svg><span style="padding-top:1px">Low</span></div></div><div class="cell" style="left:976px"><div class="bar"><i style="width:13.8px"></i></div><div class="pct">20%</div></div><div class="cell" style="left:1122px;width:32px;overflow:hidden"><div style="height:26px;width:80px;border:1px solid #e6e8ec;border-radius:6px;display:flex;align-items:center;padding-left:4px;gap:3px;flex:none"><div style="width:16px;height:16px;border-radius:3.8px;background:#0b5cd7;flex:none;display:flex;align-items:center;justify-content:center"><svg width="10" height="10" viewBox="0 0 10 10" fill="none" ><path d="M2.200 2.200 7.800 7.800M7.800 2.200 2.200 7.800" stroke="#fff" stroke-width="1.900" stroke-linecap="round"/><path d="M1.600 5h1.400M7 5h1.400" stroke="#fff" stroke-width="1.200" stroke-linecap="round"/></svg></div><span style="font-weight:700;font-size:14px">K</span></div></div><div class="abs" style="left:1151px;top:0;width:39px;height:39px;background:#fff;border-left:1px solid #f0f1f3;display:flex;align-items:center;justify-content:center"><svg width="16" height="16" viewBox="0 0 16 16" fill="none" ><circle cx="3" cy="8" r="1.2" fill="#667085"/><circle cx="8" cy="8" r="1.2" fill="#667085"/><circle cx="13" cy="8" r="1.2" fill="#667085"/></svg></div></div><div class="row" style="top:465px"><div class="abs" style="left:37px;top:15px"><svg width="12" height="10" viewBox="0 0 12 10" fill="none" ><path d="M0 5h9M6.500 2.500 9 5 6.500 7.500" stroke="#c9cdd5" stroke-width="1.200" fill="none" stroke-linecap="round" stroke-linejoin="round"/></svg></div><div class="abs" style="left:51.700px;top:12.800px"><svg width="10" height="14.3" viewBox="0 0 10 14.3" fill="none" ><rect x="0.0" y="0.0" width="3.400" height="3" rx=".8" fill="#959cab"/><rect x="0.0" y="5.65" width="3.400" height="3" rx=".8" fill="#959cab"/><rect x="0.0" y="11.3" width="3.400" height="3" rx=".8" fill="#959cab"/><rect x="6.3" y="0.0" width="3.400" height="3" rx=".8" fill="#959cab"/><rect x="6.3" y="5.65" width="3.400" height="3" rx=".8" fill="#959cab"/><rect x="6.3" y="11.3" width="3.400" height="3" rx=".8" fill="#959cab"/></svg></div><div class="cb" style="position:absolute;left:74.1px;top:13.600px"></div><div class="cell m" style="left:95px"><span style="letter-spacing:-0.11px;position:relative;top:1px">Messages</span><div class="badge"><svg width="13" height="13" viewBox="0 0 12 12" fill="none" ><path d="M6 1.500a4.500 4.500 0 1 1-2.300 8.400L1.500 10.500l.7-2.100A4.500 4.500 0 0 1 6 1.500z" stroke="#667085" stroke-width="1.300" stroke-linejoin="round"/></svg><span>1</span></div></div><div class="cell desc" style="left:353px;padding-top:2px"><div>Create hi-fi a design a sign up<br>screen step by step.</div></div><div class="cell" style="left:595.500px"><div class="av" style="background:#ec6b6b">AN</div><div class="av" style="background:#e38d0f">HG</div></div><div class="cell" style="left:694px;letter-spacing:-.27px;padding-top:2px;-webkit-text-stroke:.1px currentColor">February 14, 2024</div><div class="cell" style="left:851px"><div class="pr" style="color:#4b5567;border-color:#e4e7ec"><svg width="16" height="16" viewBox="0 0 16 16" fill="none" ><path d="M3 14.500V2.500" stroke="#4b5567" stroke-width="1.600" stroke-linecap="round"/><path d="M3 3h10l-2.300 3.500L13 10H3" stroke="#4b5567" stroke-width="1.600" stroke-linejoin="round"/></svg><span style="padding-top:1px">Low</span></div></div><div class="cell" style="left:976px"><div class="bar"><i style="width:13.8px"></i></div><div class="pct">20%</div></div><div class="cell" style="left:1122px;width:32px;overflow:hidden"><div style="height:26px;width:80px;border:1px solid #e6e8ec;border-radius:6px;display:flex;align-items:center;padding-left:4px;gap:3px;flex:none"><div style="width:16px;height:16px;border-radius:3.8px;background:#0b5cd7;flex:none;display:flex;align-items:center;justify-content:center"><svg width="10" height="10" viewBox="0 0 10 10" fill="none" ><path d="M2.200 2.200 7.800 7.800M7.800 2.200 2.200 7.800" stroke="#fff" stroke-width="1.900" stroke-linecap="round"/><path d="M1.600 5h1.400M7 5h1.400" stroke="#fff" stroke-width="1.200" stroke-linecap="round"/></svg></div><span style="font-weight:700;font-size:14px">K</span></div></div><div class="abs" style="left:1151px;top:0;width:39px;height:39px;background:#fff;border-left:1px solid #f0f1f3;display:flex;align-items:center;justify-content:center"><svg width="16" height="16" viewBox="0 0 16 16" fill="none" ><circle cx="3" cy="8" r="1.2" fill="#667085"/><circle cx="8" cy="8" r="1.2" fill="#667085"/><circle cx="13" cy="8" r="1.2" fill="#667085"/></svg></div></div><div class="vl" style="left:351px;top:185px;height:320px"></div><div class="vl" style="left:591px;top:185px;height:320px"></div><div class="vl" style="left:691px;top:185px;height:320px"></div><div class="vl" style="left:847px;top:185px;height:320px"></div><div class="vl" style="left:964px;top:185px;height:320px"></div><div class="vl" style="left:1118px;top:185px;height:320px"></div><div class="abs" style="left:46px;top:225px;width:9px;height:100.700px;border-left:1.500px solid #e3e6ea;border-bottom:1.500px solid #e3e6ea;border-bottom-left-radius:7px"></div><div class="abs" style="left:46px;top:385px;width:9px;height:100.700px;border-left:1.500px solid #e3e6ea;border-bottom:1.500px solid #e3e6ea;border-bottom-left-radius:7px"></div><div class="abs m" style="left:18px;top:505px;height:40px;display:flex;align-items:center;gap:6px;font-size:14.600px;color:#667085;letter-spacing:-.1px"><svg width="13" height="13" viewBox="0 0 16 16" fill="none" ><path d="M8 2.500v11M2.500 8h11" stroke="#4b5567" stroke-width="2" stroke-linecap="round"/></svg><span style="padding-top:1px">Add task</span></div>
 <div class="abs" style="left:10px;top:551px;width:1190px;height:5px;border-radius:3px;background:#f1f2f5"></div>
 <div class="abs" style="left:33px;top:551.500px;width:500px;height:4px;border-radius:2px;background:#6b7694"></div>

 <div class="chip" style="left:11.500px;top:581px;width:174px;background:#ecdafb;color:#9a3de0;padding-left:6px;gap:4px"><svg width="17" height="17" viewBox="0 0 16 16" fill="none" ><circle cx="7" cy="7" r="5" stroke="#9a3de0" stroke-width="1.500"/><path d="M10.800 10.800 14 14" stroke="#9a3de0" stroke-width="1.500" stroke-linecap="round"/><circle cx="7" cy="7" r="1.600" stroke="#9a3de0" stroke-width="1.200"/></svg><span style="padding-top:1px;letter-spacing:-.3px">Ready to check by PM</span></div>
 <div class="abs" style="left:194px;top:587px"><svg width="16" height="16" viewBox="0 0 16 16" fill="none" ><circle cx="3" cy="8" r="1.3" fill="#4b5567"/><circle cx="8" cy="8" r="1.3" fill="#4b5567"/><circle cx="13" cy="8" r="1.3" fill="#4b5567"/></svg></div>
 <div class="cnt" style="left:218.500px;top:584px">2</div>
 <div class="th" style="top:615px"><span style="left:12px">Task</span><span style="left:353px">Description</span><span style="left:593px">Assignee</span><span style="left:693px">Due Date</span><span style="left:850px">Priority</span><span style="left:966px">Progress</span><span style="left:1122px">Crea</span><div class="abs" style="left:1151px;top:0;width:39px;height:35px;background:#f7f8fa;border-left:1px solid #eceef1;border-radius:0 8px 8px 0;display:flex;align-items:center;justify-content:center"><svg width="14" height="14" viewBox="0 0 16 16" fill="none" ><path d="M8 2.500v11M2.500 8h11" stroke="#4b5567" stroke-width="1.6" stroke-linecap="round"/></svg></div></div><div class="row" style="top:651px"><div class="abs" style="left:8.500px;top:15.500px"><svg width="8.5" height="8.5" viewBox="0 0 10 10" fill="none" ><path d="M1.800 3.200h6.400L5 7.200z" fill="#8a92a2" stroke="#8a92a2" stroke-width=".8" stroke-linejoin="round"/></svg></div><div class="abs" style="left:31.700px;top:12.800px"><svg width="10" height="14.3" viewBox="0 0 10 14.3" fill="none" ><rect x="0.0" y="0.0" width="3.400" height="3" rx=".8" fill="#959cab"/><rect x="0.0" y="5.65" width="3.400" height="3" rx=".8" fill="#959cab"/><rect x="0.0" y="11.3" width="3.400" height="3" rx=".8" fill="#959cab"/><rect x="6.3" y="0.0" width="3.400" height="3" rx=".8" fill="#959cab"/><rect x="6.3" y="5.65" width="3.400" height="3" rx=".8" fill="#959cab"/><rect x="6.3" y="11.3" width="3.400" height="3" rx=".8" fill="#959cab"/></svg></div><div class="cb on" style="position:absolute;left:55.1px;top:13.600px"><svg style="position:absolute;left:-2px;top:-2px" width="13" height="13" viewBox="0 0 13 13"><path d="M3.300 6.700 5.600 9l4.200-4.800" stroke="#fff" stroke-width="1.800" fill="none" stroke-linecap="round" stroke-linejoin="round"/></svg></div><div class="cell m" style="left:76px"><span style="letter-spacing:-0.08px;position:relative;top:1px">Wireframing</span><div class="badge"><svg width="13" height="13" viewBox="0 0 12 12" fill="none" ><path d="M2.500 2v3.500a3 3 0 0 0 3 3h4.500" stroke="#8a92a3" stroke-width="1.700" stroke-linecap="round" stroke-linejoin="round"/><path d="M8.200 6.200 10.500 8.500 8.200 10.800" stroke="#8a92a3" stroke-width="1.500" stroke-linecap="round" stroke-linejoin="round"/></svg><span>3</span></div></div><div class="cell desc" style="left:353px;padding-top:2px"><div>-</div></div><div class="cell" style="left:595.500px"><div class="av" style="background:#8c93f5">GT</div><div class="av" style="background:#b57bee">HC</div><div class="av" style="background:#7b8499">TB</div></div><div class="cell" style="left:694px;letter-spacing:-.27px;padding-top:2px;-webkit-text-stroke:.1px currentColor">February 8, 2024</div><div class="cell" style="left:851px"><div class="pr" style="color:#e5383b;border-color:#fbd0d0"><svg width="16" height="16" viewBox="0 0 16 16" fill="none" ><path d="M3 14.500V2.500" stroke="#e5383b" stroke-width="1.600" stroke-linecap="round"/><path d="M3 3h10l-2.300 3.500L13 10H3" stroke="#e5383b" stroke-width="1.600" stroke-linejoin="round"/></svg><span style="padding-top:1px">Urgent</span></div></div><div class="cell" style="left:976px"><div class="bar"><i style="width:84.0px"></i></div><div class="pct">100%</div></div><div class="cell" style="left:1122px;width:32px;overflow:hidden"><div style="height:26px;width:80px;border:1px solid #e6e8ec;border-radius:6px;display:flex;align-items:center;padding-left:4px;gap:3px;flex:none"><div style="width:16px;height:16px;border-radius:3.8px;background:#0b5cd7;flex:none;display:flex;align-items:center;justify-content:center"><svg width="10" height="10" viewBox="0 0 10 10" fill="none" ><path d="M2.200 2.200 7.800 7.800M7.800 2.200 2.200 7.800" stroke="#fff" stroke-width="1.900" stroke-linecap="round"/><path d="M1.600 5h1.400M7 5h1.400" stroke="#fff" stroke-width="1.200" stroke-linecap="round"/></svg></div><span style="font-weight:700;font-size:14px">K</span></div></div><div class="abs" style="left:1151px;top:0;width:39px;height:39px;background:#fff;border-left:1px solid #f0f1f3;display:flex;align-items:center;justify-content:center"><svg width="16" height="16" viewBox="0 0 16 16" fill="none" ><circle cx="3" cy="8" r="1.2" fill="#667085"/><circle cx="8" cy="8" r="1.2" fill="#667085"/><circle cx="13" cy="8" r="1.2" fill="#667085"/></svg></div></div><div class="row" style="top:691px"><div class="abs" style="left:37px;top:15px"><svg width="12" height="10" viewBox="0 0 12 10" fill="none" ><path d="M0 5h9M6.500 2.500 9 5 6.500 7.500" stroke="#c9cdd5" stroke-width="1.200" fill="none" stroke-linecap="round" stroke-linejoin="round"/></svg></div><div class="abs" style="left:51.700px;top:12.800px"><svg width="10" height="14.3" viewBox="0 0 10 14.3" fill="none" ><rect x="0.0" y="0.0" width="3.400" height="3" rx=".8" fill="#959cab"/><rect x="0.0" y="5.65" width="3.400" height="3" rx=".8" fill="#959cab"/><rect x="0.0" y="11.3" width="3.400" height="3" rx=".8" fill="#959cab"/><rect x="6.3" y="0.0" width="3.400" height="3" rx=".8" fill="#959cab"/><rect x="6.3" y="5.65" width="3.400" height="3" rx=".8" fill="#959cab"/><rect x="6.3" y="11.3" width="3.400" height="3" rx=".8" fill="#959cab"/></svg></div><div class="cb on" style="position:absolute;left:74.1px;top:13.600px"><svg style="position:absolute;left:-2px;top:-2px" width="13" height="13" viewBox="0 0 13 13"><path d="M3.300 6.700 5.600 9l4.200-4.800" stroke="#fff" stroke-width="1.800" fill="none" stroke-linecap="round" stroke-linejoin="round"/></svg></div><div class="cell m" style="left:95px"><span style="letter-spacing:-0.21px;position:relative;top:1px">Onboarding</span><div class="badge"><svg width="13" height="13" viewBox="0 0 12 12" fill="none" ><path d="M6 1.500a4.500 4.500 0 1 1-2.300 8.400L1.500 10.500l.7-2.100A4.500 4.500 0 0 1 6 1.500z" stroke="#667085" stroke-width="1.300" stroke-linejoin="round"/></svg><span>2</span></div></div><div class="cell desc" style="left:353px;padding-top:2px"><div>-</div></div><div class="cell" style="left:595.500px"><div class="av" style="background:#ec6b6b">AN</div><div class="av" style="background:#e38d0f">HG</div></div><div class="cell" style="left:694px;letter-spacing:-.27px;padding-top:2px;-webkit-text-stroke:.1px currentColor">February 8, 2024</div><div class="cell" style="left:851px"><div class="pr" style="color:#e5383b;border-color:#fbd0d0"><svg width="16" height="16" viewBox="0 0 16 16" fill="none" ><path d="M3 14.500V2.500" stroke="#e5383b" stroke-width="1.600" stroke-linecap="round"/><path d="M3 3h10l-2.300 3.500L13 10H3" stroke="#e5383b" stroke-width="1.600" stroke-linejoin="round"/></svg><span style="padding-top:1px">Urgent</span></div></div><div class="cell" style="left:976px"><div class="bar"><i style="width:76.8px"></i></div><div class="pct">95%</div></div><div class="cell" style="left:1122px;width:32px;overflow:hidden"><div style="height:26px;width:80px;border:1px solid #e6e8ec;border-radius:6px;display:flex;align-items:center;padding-left:4px;gap:3px;flex:none"><div style="width:16px;height:16px;border-radius:3.8px;background:#0b5cd7;flex:none;display:flex;align-items:center;justify-content:center"><svg width="10" height="10" viewBox="0 0 10 10" fill="none" ><path d="M2.200 2.200 7.800 7.800M7.800 2.200 2.200 7.800" stroke="#fff" stroke-width="1.900" stroke-linecap="round"/><path d="M1.600 5h1.400M7 5h1.400" stroke="#fff" stroke-width="1.200" stroke-linecap="round"/></svg></div><span style="font-weight:700;font-size:14px">K</span></div></div><div class="abs" style="left:1151px;top:0;width:39px;height:39px;background:#fff;border-left:1px solid #f0f1f3;display:flex;align-items:center;justify-content:center"><svg width="16" height="16" viewBox="0 0 16 16" fill="none" ><circle cx="3" cy="8" r="1.2" fill="#667085"/><circle cx="8" cy="8" r="1.2" fill="#667085"/><circle cx="13" cy="8" r="1.2" fill="#667085"/></svg></div></div><div class="row" style="top:731px"><div class="abs" style="left:37px;top:15px"><svg width="12" height="10" viewBox="0 0 12 10" fill="none" ><path d="M0 5h9M6.500 2.500 9 5 6.500 7.500" stroke="#c9cdd5" stroke-width="1.200" fill="none" stroke-linecap="round" stroke-linejoin="round"/></svg></div><div class="abs" style="left:51.700px;top:12.800px"><svg width="10" height="14.3" viewBox="0 0 10 14.3" fill="none" ><rect x="0.0" y="0.0" width="3.400" height="3" rx=".8" fill="#959cab"/><rect x="0.0" y="5.65" width="3.400" height="3" rx=".8" fill="#959cab"/><rect x="0.0" y="11.3" width="3.400" height="3" rx=".8" fill="#959cab"/><rect x="6.3" y="0.0" width="3.400" height="3" rx=".8" fill="#959cab"/><rect x="6.3" y="5.65" width="3.400" height="3" rx=".8" fill="#959cab"/><rect x="6.3" y="11.3" width="3.400" height="3" rx=".8" fill="#959cab"/></svg></div><div class="cb on" style="position:absolute;left:74.1px;top:13.600px"><svg style="position:absolute;left:-2px;top:-2px" width="13" height="13" viewBox="0 0 13 13"><path d="M3.300 6.700 5.600 9l4.200-4.800" stroke="#fff" stroke-width="1.800" fill="none" stroke-linecap="round" stroke-linejoin="round"/></svg></div><div class="cell m" style="left:95px"><span style="letter-spacing:-0.28px;position:relative;top:1px">Login Screen</span></div><div class="cell desc" style="left:353px;padding-top:2px"><div>-</div></div><div class="cell" style="left:595.500px"><div class="av" style="background:#8c93f5">GT</div><div class="av" style="background:#b57bee">HC</div><div class="av" style="background:#b9bff7">TB</div></div><div class="cell" style="left:694px;letter-spacing:-.27px;padding-top:2px;-webkit-text-stroke:.1px currentColor">February 8, 2024</div><div class="cell" style="left:851px"><div class="pr" style="color:#e5383b;border-color:#fbd0d0"><svg width="16" height="16" viewBox="0 0 16 16" fill="none" ><path d="M3 14.500V2.500" stroke="#e5383b" stroke-width="1.600" stroke-linecap="round"/><path d="M3 3h10l-2.300 3.500L13 10H3" stroke="#e5383b" stroke-width="1.600" stroke-linejoin="round"/></svg><span style="padding-top:1px">Urgent</span></div></div><div class="cell" style="left:976px"><div class="bar"><i style="width:84.0px"></i></div><div class="pct">100%</div></div><div class="cell" style="left:1122px;width:32px;overflow:hidden"><div style="height:26px;width:80px;border:1px solid #e6e8ec;border-radius:6px;display:flex;align-items:center;padding-left:4px;gap:3px;flex:none"><div style="width:16px;height:16px;border-radius:3.8px;background:#0b5cd7;flex:none;display:flex;align-items:center;justify-content:center"><svg width="10" height="10" viewBox="0 0 10 10" fill="none" ><path d="M2.200 2.200 7.800 7.800M7.800 2.200 2.200 7.800" stroke="#fff" stroke-width="1.900" stroke-linecap="round"/><path d="M1.600 5h1.400M7 5h1.400" stroke="#fff" stroke-width="1.200" stroke-linecap="round"/></svg></div><span style="font-weight:700;font-size:14px">K</span></div></div><div class="abs" style="left:1151px;top:0;width:39px;height:39px;background:#fff;border-left:1px solid #f0f1f3;display:flex;align-items:center;justify-content:center"><svg width="16" height="16" viewBox="0 0 16 16" fill="none" ><circle cx="3" cy="8" r="1.2" fill="#667085"/><circle cx="8" cy="8" r="1.2" fill="#667085"/><circle cx="13" cy="8" r="1.2" fill="#667085"/></svg></div></div><div class="row" style="top:771px"><div class="abs" style="left:37px;top:15px"><svg width="12" height="10" viewBox="0 0 12 10" fill="none" ><path d="M0 5h9M6.500 2.500 9 5 6.500 7.500" stroke="#c9cdd5" stroke-width="1.200" fill="none" stroke-linecap="round" stroke-linejoin="round"/></svg></div><div class="abs" style="left:51.700px;top:12.800px"><svg width="10" height="14.3" viewBox="0 0 10 14.3" fill="none" ><rect x="0.0" y="0.0" width="3.400" height="3" rx=".8" fill="#959cab"/><rect x="0.0" y="5.65" width="3.400" height="3" rx=".8" fill="#959cab"/><rect x="0.0" y="11.3" width="3.400" height="3" rx=".8" fill="#959cab"/><rect x="6.3" y="0.0" width="3.400" height="3" rx=".8" fill="#959cab"/><rect x="6.3" y="5.65" width="3.400" height="3" rx=".8" fill="#959cab"/><rect x="6.3" y="11.3" width="3.400" height="3" rx=".8" fill="#959cab"/></svg></div><div class="cb on" style="position:absolute;left:74.1px;top:13.600px"><svg style="position:absolute;left:-2px;top:-2px" width="13" height="13" viewBox="0 0 13 13"><path d="M3.300 6.700 5.600 9l4.200-4.800" stroke="#fff" stroke-width="1.800" fill="none" stroke-linecap="round" stroke-linejoin="round"/></svg></div><div class="cell m" style="left:95px"><span style="letter-spacing:-0.49px;position:relative;top:1px">Sign Up Screen</span><div class="badge"><svg width="13" height="13" viewBox="0 0 12 12" fill="none" ><path d="M6 1.500a4.500 4.500 0 1 1-2.300 8.400L1.500 10.500l.7-2.100A4.500 4.500 0 0 1 6 1.500z" stroke="#667085" stroke-width="1.300" stroke-linejoin="round"/></svg><span>1</span></div></div><div class="cell desc" style="left:353px;padding-top:2px"><div>-</div></div><div class="cell" style="left:595.500px"><div class="av" style="background:#1f9d94">AN</div><div class="av" style="background:#a9afbd">HG</div></div><div class="cell" style="left:694px;letter-spacing:-.27px;padding-top:2px;-webkit-text-stroke:.1px currentColor">February 8, 2024</div><div class="cell" style="left:851px"><div class="pr" style="color:#0fa596;border-color:#c3ebe5"><svg width="16" height="16" viewBox="0 0 16 16" fill="none" ><path d="M3 14.500V2.500" stroke="#0fa596" stroke-width="1.600" stroke-linecap="round"/><path d="M3 3h10l-2.300 3.500L13 10H3" stroke="#0fa596" stroke-width="1.600" stroke-linejoin="round"/></svg><span style="padding-top:1px">Normal</span></div></div><div class="cell" style="left:976px"><div class="bar"><i style="width:76.8px"></i></div><div class="pct">95%</div></div><div class="cell" style="left:1122px;width:32px;overflow:hidden"><div style="height:26px;width:80px;border:1px solid #e6e8ec;border-radius:6px;display:flex;align-items:center;padding-left:4px;gap:3px;flex:none"><div style="width:16px;height:16px;border-radius:3.8px;background:#0b5cd7;flex:none;display:flex;align-items:center;justify-content:center"><svg width="10" height="10" viewBox="0 0 10 10" fill="none" ><path d="M2.200 2.200 7.800 7.800M7.800 2.200 2.200 7.800" stroke="#fff" stroke-width="1.900" stroke-linecap="round"/><path d="M1.600 5h1.400M7 5h1.400" stroke="#fff" stroke-width="1.200" stroke-linecap="round"/></svg></div><span style="font-weight:700;font-size:14px">K</span></div></div><div class="abs" style="left:1151px;top:0;width:39px;height:39px;background:#fff;border-left:1px solid #f0f1f3;display:flex;align-items:center;justify-content:center"><svg width="16" height="16" viewBox="0 0 16 16" fill="none" ><circle cx="3" cy="8" r="1.2" fill="#667085"/><circle cx="8" cy="8" r="1.2" fill="#667085"/><circle cx="13" cy="8" r="1.2" fill="#667085"/></svg></div></div><div class="row" style="top:811px"><div class="abs" style="left:8.500px;top:15.500px"><svg width="8.5" height="8.5" viewBox="0 0 10 10" fill="none" ><path d="M1.800 3.200h6.400L5 7.200z" fill="#8a92a2" stroke="#8a92a2" stroke-width=".8" stroke-linejoin="round"/></svg></div><div class="abs" style="left:31.700px;top:12.800px"><svg width="10" height="14.3" viewBox="0 0 10 14.3" fill="none" ><rect x="0.0" y="0.0" width="3.400" height="3" rx=".8" fill="#959cab"/><rect x="0.0" y="5.65" width="3.400" height="3" rx=".8" fill="#959cab"/><rect x="0.0" y="11.3" width="3.400" height="3" rx=".8" fill="#959cab"/><rect x="6.3" y="0.0" width="3.400" height="3" rx=".8" fill="#959cab"/><rect x="6.3" y="5.65" width="3.400" height="3" rx=".8" fill="#959cab"/><rect x="6.3" y="11.3" width="3.400" height="3" rx=".8" fill="#959cab"/></svg></div><div class="cb on" style="position:absolute;left:55.1px;top:13.600px"><svg style="position:absolute;left:-2px;top:-2px" width="13" height="13" viewBox="0 0 13 13"><path d="M3.300 6.700 5.600 9l4.200-4.800" stroke="#fff" stroke-width="1.800" fill="none" stroke-linecap="round" stroke-linejoin="round"/></svg></div><div class="cell m" style="left:76px"><span style="letter-spacing:-0.41px;position:relative;top:1px">Hi-Fi Design</span><div class="badge"><svg width="13" height="13" viewBox="0 0 12 12" fill="none" ><path d="M2.500 2v3.500a3 3 0 0 0 3 3h4.500" stroke="#8a92a3" stroke-width="1.700" stroke-linecap="round" stroke-linejoin="round"/><path d="M8.200 6.200 10.500 8.500 8.200 10.800" stroke="#8a92a3" stroke-width="1.500" stroke-linecap="round" stroke-linejoin="round"/></svg><span>3</span></div></div><div class="cell desc" style="left:353px;padding-top:2px"><div>-</div></div><div class="cell" style="left:595.500px"><div class="av" style="background:#ec6b6b">AN</div><div class="av" style="background:#e38d0f">HG</div></div><div class="cell" style="left:694px;letter-spacing:-.27px;padding-top:2px;-webkit-text-stroke:.1px currentColor">February 9, 2024</div><div class="cell" style="left:851px"><div class="pr" style="color:#4b5567;border-color:#e4e7ec"><svg width="16" height="16" viewBox="0 0 16 16" fill="none" ><path d="M3 14.500V2.500" stroke="#4b5567" stroke-width="1.600" stroke-linecap="round"/><path d="M3 3h10l-2.300 3.500L13 10H3" stroke="#4b5567" stroke-width="1.600" stroke-linejoin="round"/></svg><span style="padding-top:1px">Low</span></div></div><div class="cell" style="left:976px"><div class="bar"><i style="width:84.0px"></i></div><div class="pct">100%</div></div><div class="cell" style="left:1122px;width:32px;overflow:hidden"><div style="height:26px;width:80px;border:1px solid #e6e8ec;border-radius:6px;display:flex;align-items:center;padding-left:4px;gap:3px;flex:none"><div style="width:16px;height:16px;border-radius:3.8px;background:#0b5cd7;flex:none;display:flex;align-items:center;justify-content:center"><svg width="10" height="10" viewBox="0 0 10 10" fill="none" ><path d="M2.200 2.200 7.800 7.800M7.800 2.200 2.200 7.800" stroke="#fff" stroke-width="1.900" stroke-linecap="round"/><path d="M1.600 5h1.400M7 5h1.400" stroke="#fff" stroke-width="1.200" stroke-linecap="round"/></svg></div><span style="font-weight:700;font-size:14px">K</span></div></div><div class="abs" style="left:1151px;top:0;width:39px;height:39px;background:#fff;border-left:1px solid #f0f1f3;display:flex;align-items:center;justify-content:center"><svg width="16" height="16" viewBox="0 0 16 16" fill="none" ><circle cx="3" cy="8" r="1.2" fill="#667085"/><circle cx="8" cy="8" r="1.2" fill="#667085"/><circle cx="13" cy="8" r="1.2" fill="#667085"/></svg></div></div><div class="row" style="top:851px"><div class="abs" style="left:37px;top:15px"><svg width="12" height="10" viewBox="0 0 12 10" fill="none" ><path d="M0 5h9M6.500 2.500 9 5 6.500 7.500" stroke="#c9cdd5" stroke-width="1.200" fill="none" stroke-linecap="round" stroke-linejoin="round"/></svg></div><div class="abs" style="left:51.700px;top:12.800px"><svg width="10" height="14.3" viewBox="0 0 10 14.3" fill="none" ><rect x="0.0" y="0.0" width="3.400" height="3" rx=".8" fill="#959cab"/><rect x="0.0" y="5.65" width="3.400" height="3" rx=".8" fill="#959cab"/><rect x="0.0" y="11.3" width="3.400" height="3" rx=".8" fill="#959cab"/><rect x="6.3" y="0.0" width="3.400" height="3" rx=".8" fill="#959cab"/><rect x="6.3" y="5.65" width="3.400" height="3" rx=".8" fill="#959cab"/><rect x="6.3" y="11.3" width="3.400" height="3" rx=".8" fill="#959cab"/></svg></div><div class="cb on" style="position:absolute;left:74.1px;top:13.600px"><svg style="position:absolute;left:-2px;top:-2px" width="13" height="13" viewBox="0 0 13 13"><path d="M3.300 6.700 5.600 9l4.200-4.800" stroke="#fff" stroke-width="1.800" fill="none" stroke-linecap="round" stroke-linejoin="round"/></svg></div><div class="cell m" style="left:95px"><span style="letter-spacing:-0.21px;position:relative;top:1px">Onboarding</span><div class="badge"><svg width="13" height="13" viewBox="0 0 12 12" fill="none" ><path d="M6 1.500a4.500 4.500 0 1 1-2.300 8.400L1.500 10.500l.7-2.100A4.500 4.500 0 0 1 6 1.500z" stroke="#667085" stroke-width="1.300" stroke-linejoin="round"/></svg><span>2</span></div></div><div class="cell desc" style="left:353px;padding-top:2px"><div>Create hi-fi a design Onboarding<br>step by step.</div></div><div class="cell" style="left:595.500px"><div class="av" style="background:#ec6b6b">AN</div><div class="av" style="background:#e38d0f">HG</div></div><div class="cell" style="left:694px;letter-spacing:-.27px;padding-top:2px;-webkit-text-stroke:.1px currentColor">February 9, 2024</div><div class="cell" style="left:851px"><div class="pr" style="color:#4b5567;border-color:#e4e7ec"><svg width="16" height="16" viewBox="0 0 16 16" fill="none" ><path d="M3 14.500V2.500" stroke="#4b5567" stroke-width="1.600" stroke-linecap="round"/><path d="M3 3h10l-2.300 3.500L13 10H3" stroke="#4b5567" stroke-width="1.600" stroke-linejoin="round"/></svg><span style="padding-top:1px">Low</span></div></div><div class="cell" style="left:976px"><div class="bar"><i style="width:84.0px"></i></div><div class="pct">100%</div></div><div class="cell" style="left:1122px;width:32px;overflow:hidden"><div style="height:26px;width:80px;border:1px solid #e6e8ec;border-radius:6px;display:flex;align-items:center;padding-left:4px;gap:3px;flex:none"><div style="width:16px;height:16px;border-radius:3.8px;background:#0b5cd7;flex:none;display:flex;align-items:center;justify-content:center"><svg width="10" height="10" viewBox="0 0 10 10" fill="none" ><path d="M2.200 2.200 7.800 7.800M7.800 2.200 2.200 7.800" stroke="#fff" stroke-width="1.900" stroke-linecap="round"/><path d="M1.600 5h1.400M7 5h1.400" stroke="#fff" stroke-width="1.200" stroke-linecap="round"/></svg></div><span style="font-weight:700;font-size:14px">K</span></div></div><div class="abs" style="left:1151px;top:0;width:39px;height:39px;background:#fff;border-left:1px solid #f0f1f3;display:flex;align-items:center;justify-content:center"><svg width="16" height="16" viewBox="0 0 16 16" fill="none" ><circle cx="3" cy="8" r="1.2" fill="#667085"/><circle cx="8" cy="8" r="1.2" fill="#667085"/><circle cx="13" cy="8" r="1.2" fill="#667085"/></svg></div></div><div class="row" style="top:891px"><div class="abs" style="left:37px;top:15px"><svg width="12" height="10" viewBox="0 0 12 10" fill="none" ><path d="M0 5h9M6.500 2.500 9 5 6.500 7.500" stroke="#c9cdd5" stroke-width="1.200" fill="none" stroke-linecap="round" stroke-linejoin="round"/></svg></div><div class="abs" style="left:51.700px;top:12.800px"><svg width="10" height="14.3" viewBox="0 0 10 14.3" fill="none" ><rect x="0.0" y="0.0" width="3.400" height="3" rx=".8" fill="#959cab"/><rect x="0.0" y="5.65" width="3.400" height="3" rx=".8" fill="#959cab"/><rect x="0.0" y="11.3" width="3.400" height="3" rx=".8" fill="#959cab"/><rect x="6.3" y="0.0" width="3.400" height="3" rx=".8" fill="#959cab"/><rect x="6.3" y="5.65" width="3.400" height="3" rx=".8" fill="#959cab"/><rect x="6.3" y="11.3" width="3.400" height="3" rx=".8" fill="#959cab"/></svg></div><div class="cb on" style="position:absolute;left:74.1px;top:13.600px"><svg style="position:absolute;left:-2px;top:-2px" width="13" height="13" viewBox="0 0 13 13"><path d="M3.300 6.700 5.600 9l4.200-4.800" stroke="#fff" stroke-width="1.800" fill="none" stroke-linecap="round" stroke-linejoin="round"/></svg></div><div class="cell m" style="left:95px"><span style="letter-spacing:-0.28px;position:relative;top:1px">Login Screen</span></div><div class="cell desc" style="left:353px;padding-top:2px"><div>Create hi-fi a design a login screen<br>step by step.</div></div><div class="cell" style="left:595.500px"><div class="av" style="background:#ec6b6b">AN</div><div class="av" style="background:#e38d0f">HG</div></div><div class="cell" style="left:694px;letter-spacing:-.27px;padding-top:2px;-webkit-text-stroke:.1px currentColor">February 9, 2024</div><div class="cell" style="left:851px"><div class="pr" style="color:#4b5567;border-color:#e4e7ec"><svg width="16" height="16" viewBox="0 0 16 16" fill="none" ><path d="M3 14.500V2.500" stroke="#4b5567" stroke-width="1.600" stroke-linecap="round"/><path d="M3 3h10l-2.300 3.500L13 10H3" stroke="#4b5567" stroke-width="1.600" stroke-linejoin="round"/></svg><span style="padding-top:1px">Low</span></div></div><div class="cell" style="left:976px"><div class="bar"><i style="width:84.0px"></i></div><div class="pct">100%</div></div><div class="cell" style="left:1122px;width:32px;overflow:hidden"><div style="height:26px;width:80px;border:1px solid #e6e8ec;border-radius:6px;display:flex;align-items:center;padding-left:4px;gap:3px;flex:none"><div style="width:16px;height:16px;border-radius:3.8px;background:#0b5cd7;flex:none;display:flex;align-items:center;justify-content:center"><svg width="10" height="10" viewBox="0 0 10 10" fill="none" ><path d="M2.200 2.200 7.800 7.800M7.800 2.200 2.200 7.800" stroke="#fff" stroke-width="1.900" stroke-linecap="round"/><path d="M1.600 5h1.400M7 5h1.400" stroke="#fff" stroke-width="1.200" stroke-linecap="round"/></svg></div><span style="font-weight:700;font-size:14px">K</span></div></div><div class="abs" style="left:1151px;top:0;width:39px;height:39px;background:#fff;border-left:1px solid #f0f1f3;display:flex;align-items:center;justify-content:center"><svg width="16" height="16" viewBox="0 0 16 16" fill="none" ><circle cx="3" cy="8" r="1.2" fill="#667085"/><circle cx="8" cy="8" r="1.2" fill="#667085"/><circle cx="13" cy="8" r="1.2" fill="#667085"/></svg></div></div><div class="row" style="top:931px"><div class="abs" style="left:37px;top:15px"><svg width="12" height="10" viewBox="0 0 12 10" fill="none" ><path d="M0 5h9M6.500 2.500 9 5 6.500 7.500" stroke="#c9cdd5" stroke-width="1.200" fill="none" stroke-linecap="round" stroke-linejoin="round"/></svg></div><div class="abs" style="left:51.700px;top:12.800px"><svg width="10" height="14.3" viewBox="0 0 10 14.3" fill="none" ><rect x="0.0" y="0.0" width="3.400" height="3" rx=".8" fill="#959cab"/><rect x="0.0" y="5.65" width="3.400" height="3" rx=".8" fill="#959cab"/><rect x="0.0" y="11.3" width="3.400" height="3" rx=".8" fill="#959cab"/><rect x="6.3" y="0.0" width="3.400" height="3" rx=".8" fill="#959cab"/><rect x="6.3" y="5.65" width="3.400" height="3" rx=".8" fill="#959cab"/><rect x="6.3" y="11.3" width="3.400" height="3" rx=".8" fill="#959cab"/></svg></div><div class="cb on" style="position:absolute;left:74.1px;top:13.600px"><svg style="position:absolute;left:-2px;top:-2px" width="13" height="13" viewBox="0 0 13 13"><path d="M3.300 6.700 5.600 9l4.200-4.800" stroke="#fff" stroke-width="1.800" fill="none" stroke-linecap="round" stroke-linejoin="round"/></svg></div><div class="cell m" style="left:95px"><span style="letter-spacing:-0.49px;position:relative;top:1px">Sign Up Screen</span><div class="badge"><svg width="13" height="13" viewBox="0 0 12 12" fill="none" ><path d="M6 1.500a4.500 4.500 0 1 1-2.300 8.400L1.500 10.500l.7-2.100A4.500 4.500 0 0 1 6 1.500z" stroke="#667085" stroke-width="1.300" stroke-linejoin="round"/></svg><span>1</span></div></div><div class="cell desc" style="left:353px;padding-top:2px"><div>Create hi-fi a design a sign up<br>screen step by step.</div></div><div class="cell" style="left:595.500px"><div class="av" style="background:#ec6b6b">AN</div><div class="av" style="background:#e38d0f">HG</div></div><div class="cell" style="left:694px;letter-spacing:-.27px;padding-top:2px;-webkit-text-stroke:.1px currentColor">February 9, 2024</div><div class="cell" style="left:851px"><div class="pr" style="color:#4b5567;border-color:#e4e7ec"><svg width="16" height="16" viewBox="0 0 16 16" fill="none" ><path d="M3 14.500V2.500" stroke="#4b5567" stroke-width="1.600" stroke-linecap="round"/><path d="M3 3h10l-2.300 3.500L13 10H3" stroke="#4b5567" stroke-width="1.600" stroke-linejoin="round"/></svg><span style="padding-top:1px">Low</span></div></div><div class="cell" style="left:976px"><div class="bar"><i style="width:84.0px"></i></div><div class="pct">100%</div></div><div class="cell" style="left:1122px;width:32px;overflow:hidden"><div style="height:26px;width:80px;border:1px solid #e6e8ec;border-radius:6px;display:flex;align-items:center;padding-left:4px;gap:3px;flex:none"><div style="width:16px;height:16px;border-radius:3.8px;background:#0b5cd7;flex:none;display:flex;align-items:center;justify-content:center"><svg width="10" height="10" viewBox="0 0 10 10" fill="none" ><path d="M2.200 2.200 7.800 7.800M7.800 2.200 2.200 7.800" stroke="#fff" stroke-width="1.900" stroke-linecap="round"/><path d="M1.600 5h1.400M7 5h1.400" stroke="#fff" stroke-width="1.200" stroke-linecap="round"/></svg></div><span style="font-weight:700;font-size:14px">K</span></div></div><div class="abs" style="left:1151px;top:0;width:39px;height:39px;background:#fff;border-left:1px solid #f0f1f3;display:flex;align-items:center;justify-content:center"><svg width="16" height="16" viewBox="0 0 16 16" fill="none" ><circle cx="3" cy="8" r="1.2" fill="#667085"/><circle cx="8" cy="8" r="1.2" fill="#667085"/><circle cx="13" cy="8" r="1.2" fill="#667085"/></svg></div></div><div class="vl" style="left:351px;top:651px;height:320px"></div><div class="vl" style="left:591px;top:651px;height:320px"></div><div class="vl" style="left:691px;top:651px;height:320px"></div><div class="vl" style="left:847px;top:651px;height:320px"></div><div class="vl" style="left:964px;top:651px;height:320px"></div><div class="vl" style="left:1118px;top:651px;height:320px"></div><div class="abs" style="left:46px;top:691px;width:9px;height:100.700px;border-left:1.500px solid #e3e6ea;border-bottom:1.500px solid #e3e6ea;border-bottom-left-radius:7px"></div><div class="abs" style="left:46px;top:851px;width:9px;height:100.700px;border-left:1.500px solid #e3e6ea;border-bottom:1.500px solid #e3e6ea;border-bottom-left-radius:7px"></div><div class="abs m" style="left:18px;top:971px;height:40px;display:flex;align-items:center;gap:6px;font-size:14.600px;color:#667085;letter-spacing:-.1px"><svg width="13" height="13" viewBox="0 0 16 16" fill="none" ><path d="M8 2.500v11M2.500 8h11" stroke="#4b5567" stroke-width="2" stroke-linecap="round"/></svg><span style="padding-top:1px">Add task</span></div>
</div>
</div></div>
</body></html>
